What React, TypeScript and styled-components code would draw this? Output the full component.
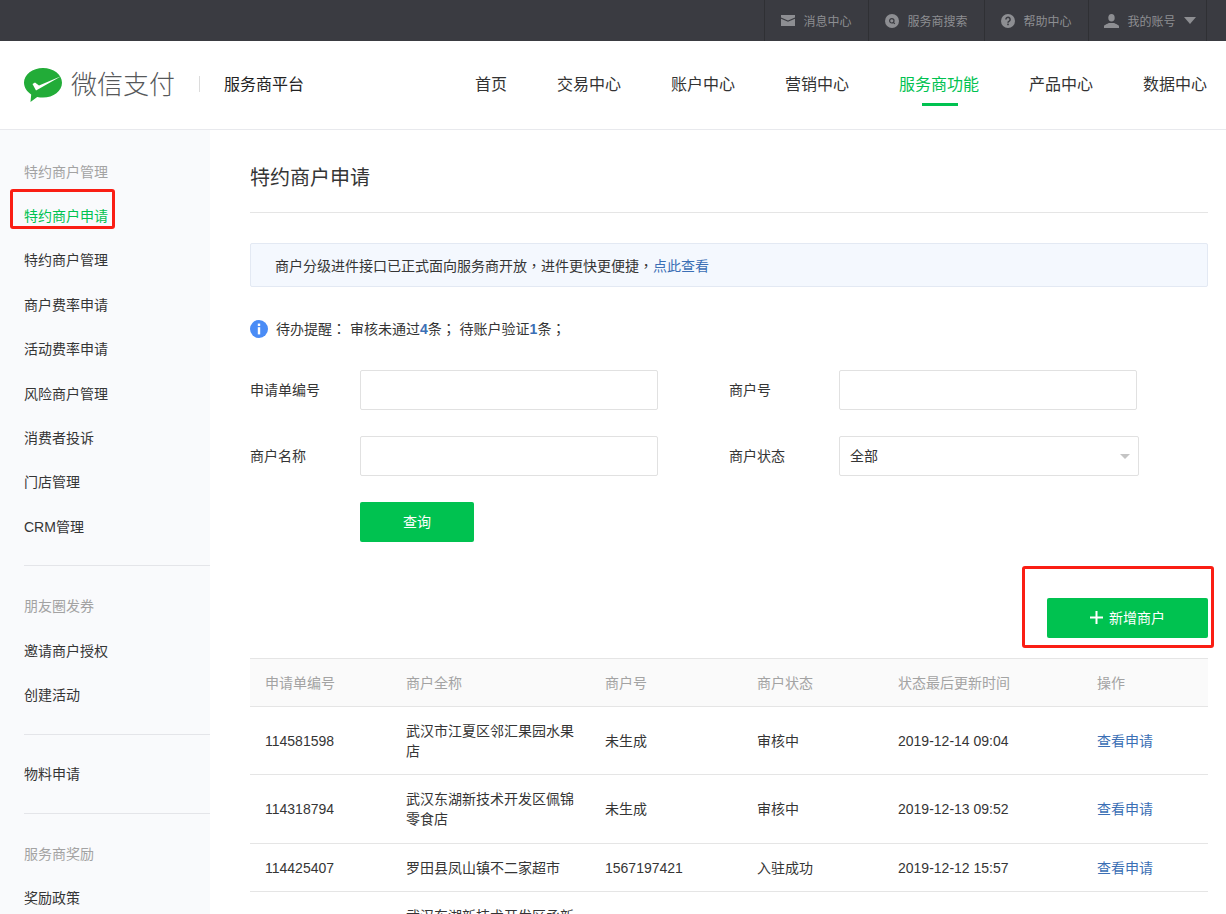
import React from 'react';
import styled, { createGlobalStyle } from 'styled-components';

const GlobalStyle = createGlobalStyle`
  html, body {
    margin: 0;
    padding: 0;
    height: 100%;
    overflow: hidden;
    background: #fff;
  }
  body {
    font-family: "Liberation Sans", "Noto Sans CJK SC", sans-serif;
    font-size: 14px;
    color: #353535;
  }
  * {
    box-sizing: border-box;
  }
`;

const Page = styled.div`
  position: relative;
  width: 1226px;
  height: 914px;
  overflow: hidden;
`;

const TopBar = styled.div`
  height: 41px;
  background: #3a3b41;
  display: flex;
  justify-content: flex-end;
  padding-right: 19px;
`;

const TopItem = styled.a<{ $w: number }>`
  width: ${p => p.$w}px;
  height: 41px;
  display: flex;
  align-items: center;
  justify-content: center;
  gap: 8px;
  font-size: 12px;
  color: #8d8e92;
  border-left: 1px solid #2f3034;
  &:last-child {
    border-right: 1px solid #2f3034;
    padding-left: 5px;
  }
  svg {
    flex: none;
  }
`;

const Header = styled.div`
  height: 89px;
  border-bottom: 1px solid #e8e9ed;
  display: flex;
  align-items: center;
  padding: 0 19px 0 24px;
`;

const Brand = styled.div`
  display: flex;
  align-items: center;
  gap: 9px;
`;

const BrandName = styled.span`
  font-size: 26px;
  color: #56585a;
  font-weight: 300;
  padding-bottom: 5px;
`;

const BrandDivider = styled.span`
  width: 1px;
  height: 16px;
  background: #dcdcdc;
  margin: 0 24px 2px;
`;

const PlatformName = styled.span`
  font-size: 16px;
  color: #222;
  padding-bottom: 5px;
`;

const Nav = styled.nav`
  margin-left: auto;
  display: flex;
  gap: 50px;
`;

const NavItem = styled.a<{ $active?: boolean }>`
  position: relative;
  font-size: 16px;
  line-height: 24px;
  color: ${p => (p.$active ? '#00c250' : '#333')};
  ${p =>
    p.$active &&
    `
    &::after {
      content: '';
      position: absolute;
      left: 50%;
      bottom: -9px;
      width: 36px;
      height: 3px;
      margin-left: -17px;
      background: #00c250;
    }
  `}
`;

const Body = styled.div`
  display: flex;
  align-items: stretch;
`;

const Sidebar = styled.aside`
  width: 210px;
  flex: none;
  min-height: 790px;
  background: #f9fafc;
  padding-top: 19.55px;
`;

const SideGroup = styled.div`
  padding: 0 0 16.3px;
  & + &::before {
    content: '';
    display: block;
    height: 1px;
    margin: 0 0 18px 24px;
    background: #e4e5e9;
  }
  &:nth-child(3)::before {
    margin-bottom: 17.4px;
  }
`;

const SideTitle = styled.div`
  height: 44.4px;
  line-height: 44.4px;
  padding-left: 24px;
  color: #a3a3a3;
`;

const SideLink = styled.a<{ $active?: boolean }>`
  display: block;
  height: 44.4px;
  line-height: 44.4px;
  padding-left: 24px;
  color: ${p => (p.$active ? '#00c250' : '#353535')};
`;

const Main = styled.main`
  flex: 1;
  min-width: 0;
  padding: 0 18px 0 40px;
`;

const Title = styled.h1`
  margin: 0;
  height: 83px;
  line-height: 95px;
  font-size: 20px;
  font-weight: 400;
  color: #353535;
  border-bottom: 1px solid #e5e5e5;
  span {
    position: relative;
    top: 1px;
  }
`;

const Notice = styled.div`
  margin-top: 30px;
  height: 44px;
  line-height: 42px;
  padding-left: 24px;
  background: #f4f8fe;
  border: 1px solid #e3e9f3;
  border-radius: 2px;
  color: #353535;
`;

const TextLink = styled.a`
  color: #3b6fb5;
`;

const Punct = styled.span`
  font-family: "Noto Sans CJK TC", sans-serif;
`;

const Reminder = styled.div`
  margin-top: 32px;
  height: 20px;
  display: flex;
  align-items: center;
  gap: 8px;
  white-space: pre;
`;

const ReminderText = styled.span`
  padding-bottom: 2px;
`;

const Count = styled.b`
  color: #3b6fb5;
  font-weight: 700;
`;

const FormGrid = styled.div`
  margin-top: 31px;
  display: grid;
  grid-template-columns: 479px 1fr;
  row-gap: 26px;
`;

const Field = styled.label`
  display: flex;
  align-items: center;
`;

const FieldLabel = styled.span`
  width: 110px;
  flex: none;
  padding-bottom: 2px;
`;

const Input = styled.input`
  width: 298px;
  height: 40px;
  padding: 0 10px;
  border: 1px solid #e1e1e1;
  border-radius: 2px;
  background: #fff;
  outline: none;
`;

const SelectBox = styled.div`
  position: relative;
  width: 300px;
  height: 40px;
  line-height: 38px;
  padding: 0 10px;
  border: 1px solid #e1e1e1;
  border-radius: 2px;
  &::after {
    content: '';
    position: absolute;
    right: 8px;
    top: 17px;
    border-left: 5px solid transparent;
    border-right: 5px solid transparent;
    border-top: 5px solid #c4c4c4;
  }
`;

const QueryRow = styled.div`
  margin-top: 26px;
  padding-left: 110px;
`;

const GreenButton = styled.button<{ $w: number }>`
  width: ${p => p.$w}px;
  height: 40px;
  display: inline-flex;
  align-items: center;
  justify-content: center;
  gap: 6px;
  padding: 0 0 2px;
  border: 0;
  border-radius: 2px;
  background: #00c250;
  color: #fff;
  font: inherit;
  font-size: 14px;
`;

const ActionRow = styled.div`
  margin-top: 56px;
  display: flex;
  justify-content: flex-end;
`;

const Table = styled.table`
  margin-top: 20px;
  width: 100%;
  border-collapse: collapse;
  table-layout: fixed;
`;

const Th = styled.th<{ $w: number }>`
  width: ${p => p.$w}px;
  height: 48px;
  padding: 0 15px 2px;
  background: #fafafa;
  border-top: 1px solid #e5e5e5;
  border-bottom: 1px solid #e5e5e5;
  color: #a3a3a3;
  font-weight: 400;
  text-align: left;
`;

const Td = styled.td`
  padding: 15px 15px 13px;
  border-bottom: 1px solid #e5e5e5;
  line-height: 19.65px;
  vertical-align: middle;
`;

const Annotation = styled.div<{ $x: number; $y: number; $w: number; $h: number }>`
  position: absolute;
  left: ${p => p.$x}px;
  top: ${p => p.$y}px;
  width: ${p => p.$w}px;
  height: ${p => p.$h}px;
  border: 3px solid #fa1e14;
  border-radius: 3px;
  pointer-events: none;
`;

const groups = [
  {
    title: '特约商户管理',
    links: ['特约商户申请', '特约商户管理', '商户费率申请', '活动费率申请', '风险商户管理', '消费者投诉', '门店管理', 'CRM管理'],
  },
  { title: '朋友圈发券', links: ['邀请商户授权', '创建活动'] },
  { title: '', links: ['物料申请'] },
  { title: '服务商奖励', links: ['奖励政策'] },
];

const columns = [
  ['申请单编号', 141],
  ['商户全称', 199],
  ['商户号', 152],
  ['商户状态', 141],
  ['状态最后更新时间', 199],
  ['操作', 126],
] as const;

const rows = [
  ['114581598', '武汉市江夏区邻汇果园水果店', '未生成', '审核中', '2019-12-14 09:04'],
  ['114318794', '武汉东湖新技术开发区佩锦零食店', '未生成', '审核中', '2019-12-13 09:52'],
  ['114425407', '罗田县凤山镇不二家超市', '1567197421', '入驻成功', '2019-12-12 15:57'],
  ['114302216', '武汉东湖新技术开发区丞新便利店', '未生成', '审核中', '2019-12-11 10:21'],
];

const MailIcon = () => (
  <svg width="14" height="11" viewBox="0 0 14 11" fill="#8d8e92">
    <path d="M0 0h14v2.600L7 5.600 0 2.600z" />
    <path d="M0 3.800l7 3 7-3V11H0z" />
  </svg>
);

const SearchIcon = () => (
  <svg width="14" height="14" viewBox="0 0 14 14">
    <circle cx="7" cy="7" r="7" fill="#8d8e92" />
    <circle cx="6.800" cy="6.800" r="2.200" fill="none" stroke="#3a3b41" strokeWidth="1.200" />
    <path d="M8.400 8.400l1.400 1.400" stroke="#3a3b41" strokeWidth="1.200" />
  </svg>
);

const HelpIcon = () => (
  <svg width="14" height="14" viewBox="0 0 14 14">
    <circle cx="7" cy="7" r="7" fill="#8d8e92" />
    <path d="M4.900 5.400a2.100 2.100 0 1 1 3.300 1.700c-.8.500-1.200.900-1.200 1.700" fill="none" stroke="#3a3b41" strokeWidth="1.500" />
    <rect x="6.200" y="9.600" width="1.600" height="1.600" fill="#3a3b41" />
  </svg>
);

const UserIcon = () => (
  <svg width="15" height="14" viewBox="0 0 15 14" fill="#8d8e92">
    <ellipse cx="7.500" cy="3.800" rx="3.200" ry="3.800" />
    <path d="M0 14v-1.800c0-1.300 3.400-2.200 5-3.200h5c1.600 1 5 1.900 5 3.200V14z" />
  </svg>
);

const Caret = () => (
  <svg width="12" height="7" viewBox="0 0 12 7" fill="#8d8e92">
    <path d="M0 0h12L6 7z" />
  </svg>
);

const WechatPayLogo = () => (
  <svg width="38" height="35" viewBox="0 0 38 35">
    <path
      d="M19 0C8.500 0 0 6.500 0 14.600c0 4.900 2.800 9.200 7.200 11.900l-.7 7.500 6.700-5c1.800.4 3.800.6 5.800.6 10.500 0 19-6.600 19-14.900S29.500 0 19 0z"
      fill="#22ac38"
    />
    <path d="M8.500 16l2.500-1.500 4 3L37.500 8 12 22.500z" fill="#fff" />
  </svg>
);

const InfoIcon = () => (
  <svg width="18" height="18" viewBox="0 0 18 18">
    <circle cx="9" cy="9" r="9" fill="#4a8cf6" />
    <rect x="7.800" y="3.600" width="2.400" height="2.400" fill="#fff" />
    <rect x="7.800" y="7.200" width="2.400" height="7.200" fill="#fff" />
  </svg>
);

const PlusIcon = () => (
  <svg width="13" height="13" viewBox="0 0 13 13" fill="#fff">
    <rect x="5.500" width="2" height="13" />
    <rect y="5.500" width="13" height="2" />
  </svg>
);

const App = () => {
  return (
    <Page>
      <GlobalStyle />
      <TopBar>
        <TopItem $w={104}><MailIcon />消息中心</TopItem>
        <TopItem $w={116}><SearchIcon />服务商搜索</TopItem>
        <TopItem $w={104}><HelpIcon />帮助中心</TopItem>
        <TopItem $w={119}><UserIcon />我的账号<Caret /></TopItem>
      </TopBar>
      <Header>
        <Brand>
          <WechatPayLogo />
          <BrandName>微信支付</BrandName>
        </Brand>
        <BrandDivider />
        <PlatformName>服务商平台</PlatformName>
        <Nav>
          <NavItem>首页</NavItem>
          <NavItem>交易中心</NavItem>
          <NavItem>账户中心</NavItem>
          <NavItem>营销中心</NavItem>
          <NavItem $active>服务商功能</NavItem>
          <NavItem>产品中心</NavItem>
          <NavItem>数据中心</NavItem>
        </Nav>
      </Header>
      <Body>
        <Sidebar>
          {groups.map((g, i) => (
            <SideGroup key={i}>
              {g.title && <SideTitle>{g.title}</SideTitle>}
              {g.links.map(l => (
                <SideLink key={l} $active={l === '特约商户申请'}>{l}</SideLink>
              ))}
            </SideGroup>
          ))}
        </Sidebar>
        <Main>
          <Title><span>特约商户申请</span></Title>
          <Notice>
            商户分级进件接口已正式面向服务商开放<Punct>，</Punct>进件更快更便捷<Punct>，</Punct><TextLink>点此查看</TextLink>
          </Notice>
          <Reminder>
            <InfoIcon />
            <ReminderText>
              待办提醒<Punct>：</Punct> 审核未通过<Count>4</Count>条<Punct>；</Punct> 待账户验证<Count>1</Count>条<Punct>；</Punct>
            </ReminderText>
          </Reminder>
          <FormGrid>
            <Field>
              <FieldLabel>申请单编号</FieldLabel>
              <Input />
            </Field>
            <Field>
              <FieldLabel>商户号</FieldLabel>
              <Input />
            </Field>
            <Field>
              <FieldLabel>商户名称</FieldLabel>
              <Input />
            </Field>
            <Field>
              <FieldLabel>商户状态</FieldLabel>
              <SelectBox>全部</SelectBox>
            </Field>
          </FormGrid>
          <QueryRow>
            <GreenButton $w={114}>查询</GreenButton>
          </QueryRow>
          <ActionRow>
            <GreenButton $w={161}><PlusIcon />新增商户</GreenButton>
          </ActionRow>
          <Table>
            <thead>
              <tr>
                {columns.map(([label, w]) => (
                  <Th key={label} $w={w}>{label}</Th>
                ))}
              </tr>
            </thead>
            <tbody>
              {rows.map(r => (
                <tr key={r[0]}>
                  <Td>{r[0]}</Td>
                  <Td>{r[1]}</Td>
                  <Td>{r[2]}</Td>
                  <Td>{r[3]}</Td>
                  <Td>{r[4]}</Td>
                  <Td><TextLink>查看申请</TextLink></Td>
                </tr>
              ))}
            </tbody>
          </Table>
        </Main>
      </Body>
      <Annotation $x={10} $y={189} $w={105} $h={40} />
      <Annotation $x={1022} $y={566} $w={192} $h={82} />
    </Page>
  );
};

export default App;
